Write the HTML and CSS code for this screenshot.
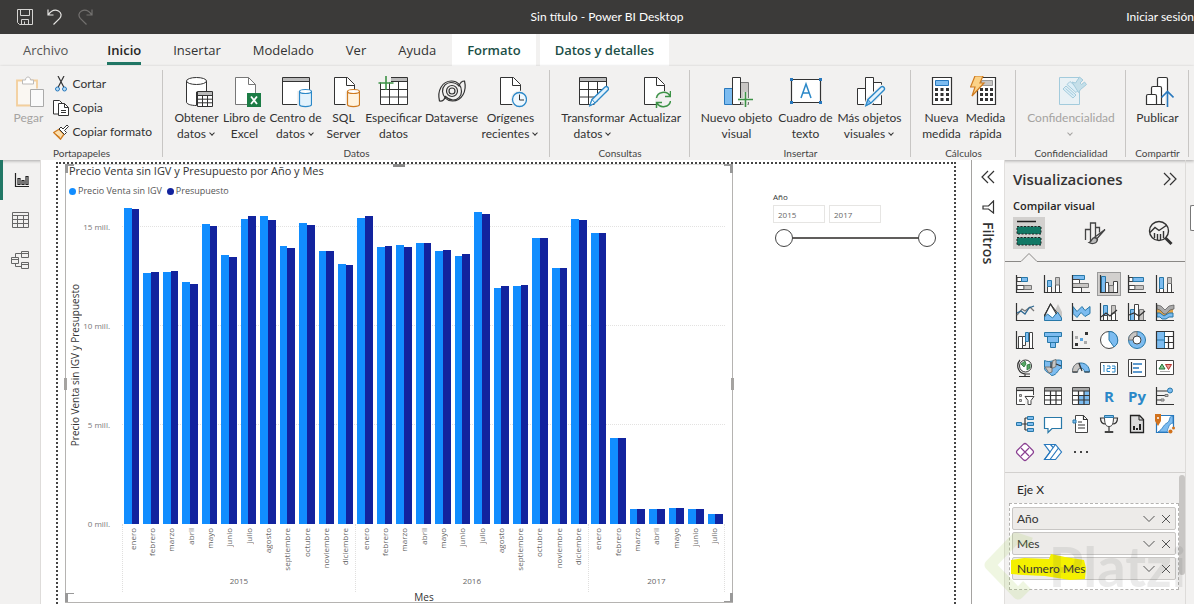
FILE: index.html
```html
<!DOCTYPE html>
<html lang="es">
<head>
<meta charset="utf-8">
<title>Sin título - Power BI Desktop</title>
<meta name="viewport" content="width=device-width, initial-scale=1">
<link rel="stylesheet" href="styles.css">
</head>
<body>
<header class="titlebar">
  <div class="quick">
    <button aria-label="Guardar"><svg width="16" height="16" viewBox="0 0 16 16" fill="none" stroke="#d6d5d3"><path d="M.5.5h15v15h-13l-2-2zM3.500.5v6h9v-6M4.500 15.500v-5h7v5M7.500 15v-2.500"/></svg></button>
    <button aria-label="Deshacer"><svg width="16" height="16" viewBox="0 0 16 16" fill="none" stroke="#e6e5e3" stroke-width="1.200"><path d="M1 .5v5.500h5.500M1.200 5.800C4 2 8 .2 11.500 2c3 1.700 3.300 5 1.200 7.300L6.500 15.500"/></svg></button>
    <button aria-label="Rehacer"><svg width="16" height="16" viewBox="0 0 16 16" fill="none" stroke="#73716f" stroke-width="1.200"><path d="M15 .5v5.500H9.500M14.800 5.800C12 2 8 .2 4.500 2c-3 1.700-3.300 5-1.200 7.300L9.500 15.500"/></svg></button>
  </div>
  <h1 class="app-title">Sin título - Power BI Desktop</h1>
  <button class="signin">Iniciar sesión</button>
</header>

<nav class="tabs" aria-label="Cinta de opciones">
  <button class="tab file">Archivo</button>
  <button class="tab active">Inicio</button>
  <button class="tab">Insertar</button>
  <button class="tab">Modelado</button>
  <button class="tab">Ver</button>
  <button class="tab">Ayuda</button>
  <button class="tab context">Formato</button>
  <button class="tab context">Datos y detalles</button>
</nav>

<div class="ribbon">
  <section class="group g-clip">
    <div class="items">
      <button class="cmd w46 disabled"><svg width="32" height="32" viewBox="0 0 32 32" fill="none"><path d="M5 5h18v23H5z" fill="#faf7f2"/><path d="M10 4.500H4v25h13M18 4.500h6v8" stroke="#f3cf9c" stroke-width="1.800"/><path d="M9.500 8V4h3c0-4 5-4 5 0h3v4z" fill="#fff" stroke="#bdbbb9"/><path d="M17.500 13.500h13v17h-13z" fill="#fafafa" stroke="#aaa"/></svg><span>Pegar</span></button>
      <div class="stack">
        <button class="small"><svg width="16" height="16" viewBox="0 0 16 16" fill="none"><path d="M5 0l6 11.500M11 0L5 11.500" stroke="#333" stroke-width="1.200"/><circle cx="4.500" cy="13" r="2" fill="#b8dcf5" stroke="#2878bd"/><circle cx="11.500" cy="13" r="2" fill="#b8dcf5" stroke="#2878bd"/></svg>Cortar</button>
        <button class="small"><svg width="16" height="16" viewBox="0 0 16 16" fill="#fff" stroke="#333"><path d="M5.500 14H.5V.5h6L9 3"/><path d="M5.500 3.500h6l4 4v8h-10z"/><path d="M11.500 3.500v4h4M8 10.500h5M8 12.500h5" fill="none"/></svg>Copia</button>
        <button class="small"><svg width="16" height="16" viewBox="0 0 16 16"><path d="M.7 8.500L6 5.200l5 5-3.500 5z" fill="#fce0b0" stroke="#cf7b20" stroke-width="1.300"/><path d="M3 10.500l4 3" stroke="#cf7b20"/><path d="M6 5l2-2 2 2 4-4 1.500 1.500-4 4 2 2-2 2z" fill="#fff" stroke="#333"/></svg>Copiar formato</button>
      </div>
    </div>
    <h2 class="group-name">Portapapeles</h2>
  </section>

  <section class="group g-data">
    <div class="items">
      <button class="cmd w48"><svg width="32" height="32" viewBox="0 0 32 32"><path d="M5.500 5v21c0 2 4 3.500 10 3.500V16h10V5" fill="#fff" stroke="#333"/><ellipse cx="15.500" cy="5" rx="10" ry="3.500" fill="#fff" stroke="#333"/><path d="M16.500 15.500h15v15h-15z" fill="#fff" stroke="#333"/><path d="M17 16h14v3H17z" fill="#bbb"/><path d="M16.500 19.500h15M16.500 23.200h15M16.500 26.800h15M21.500 19v11.500M26.500 19v11.500" stroke="#333" fill="none"/></svg><span>Obtener<br>datos<i class="caret"></i></span></button>
      <button class="cmd w48"><svg width="32" height="32" viewBox="0 0 32 32"><path d="M6.500 1.500h13l7 7v20h-20z" fill="#fff" stroke="#777"/><path d="M19.500 1.500v7h7" fill="none" stroke="#777"/><path d="M18 17h14v14H18z" fill="#1c7c45"/><path d="M22 20.500l6 7.500M28 20.500L22 28" stroke="#fff" stroke-width="1.800"/></svg><span>Libro de<br>Excel</span></button>
      <button class="cmd w54"><svg width="32" height="32" viewBox="0 0 32 32"><path d="M2.500 1.500h27v27h-27z" fill="#fff" stroke="#333"/><path d="M3 2h26v3.500H3z" fill="#bbb"/><path d="M2.500 5.500h27" stroke="#333"/><path d="M18.500 15v13c0 3.300 13 3.300 13 0V15" fill="#fff" stroke="#f2f1f0" stroke-width="3"/><path d="M19.500 15.500v13c0 2.700 12 2.700 12 0v-13" fill="#e3f2fc" stroke="#2b88c8" stroke-width="1.200"/><ellipse cx="25.500" cy="15.500" rx="6" ry="2" fill="#fff" stroke="#2b88c8" stroke-width="1.200"/></svg><span>Centro de<br>datos<i class="caret"></i></span></button>
      <button class="cmd w42"><svg width="32" height="32" viewBox="0 0 32 32"><path d="M6.500 1.500h13l7 7v20h-20z" fill="#fff" stroke="#333"/><path d="M18.500 1.500v8h8" fill="none" stroke="#333"/><path d="M19.500 15.500v13c0 2.700 12 2.700 12 0v-13" fill="#fff3df" stroke="#f2f1f0" stroke-width="4"/><path d="M19.500 15.500v13c0 2.700 12 2.700 12 0v-13" fill="#fff3df" stroke="#cf7b20" stroke-width="1.200"/><ellipse cx="25.500" cy="15.500" rx="6" ry="2" fill="#fff" stroke="#cf7b20" stroke-width="1.200"/></svg><span>SQL<br>Server</span></button>
      <button class="cmd w58"><svg width="32" height="32" viewBox="0 0 32 32"><path d="M2.500 1.500h27v27h-27z" fill="#fff" stroke="#333"/><path d="M3 2h26v3.500H3z" fill="#bbb"/><path d="M2.500 5.500h27M2.500 13.500h27M2.500 21h27M11.500 5.500v23M20.500 5.500v23" stroke="#333" fill="none"/><path d="M0 0h13v6.500H0z" fill="#f2f1f0"/><path d="M8 0v14M.5 7h15" stroke="#3c9246" stroke-width="1.600"/></svg><span>Especificar<br>datos</span></button>
      <button class="cmd w58"><svg width="32" height="32" viewBox="0 0 32 32" fill="none" stroke="#333" stroke-width="1.200"><path d="M3.500 25C1 15 6 5 15.500 5 22 5 25.500 10 25.500 15.500c0 5-4 8.500-8.500 8.500-4 0-6-2-7.500-3.500C8.500 23.500 6.500 25.500 3.500 25z"/><path d="M28.500 5C31 15 26 25 16.500 25 11 25 7 21 6.500 15.500 6.500 10 10.500 6.500 15 6.500c4 0 6 1.500 8 3.500 1-3 2.500-5 5.500-5z"/><circle cx="16" cy="15" r="5.500" fill="#f2f1f0"/><circle cx="16" cy="15" r="3"/></svg><span>Dataverse</span></button>
      <button class="cmd w60"><svg width="32" height="32" viewBox="0 0 32 32"><path d="M5.500 1.500h13l7 7v20h-20z" fill="#fff" stroke="#333"/><path d="M17.500 1.500v8h8" fill="none" stroke="#333"/><circle cx="24.500" cy="23.500" r="9" fill="#f2f1f0"/><circle cx="24.500" cy="23.500" r="7" fill="#eff8fe" stroke="#2b88c8" stroke-width="1.300"/><path d="M24.500 18.500v5.500h4.500" fill="none" stroke="#333"/></svg><span>Orígenes<br>recientes<i class="caret"></i></span></button>
    </div>
    <h2 class="group-name">Datos</h2>
  </section>

  <section class="group g-query">
    <div class="items">
      <button class="cmd w70"><svg width="32" height="32" viewBox="0 0 32 32"><path d="M2.500 1.500h27v27h-27z" fill="#fff" stroke="#333"/><path d="M3 2h26v3.500H3z" fill="#bbb"/><path d="M2.500 5.500h27M2.500 13.500h27M2.500 21h27M11.500 5.500v23M20.500 5.500v23" stroke="#333" fill="none"/><path d="M30 15v15H16z" fill="#f2f1f0"/><path d="M13 29.500l2-6L28 11c2-1.500 4.500 1 3 3L18 27z" fill="#e3f2fc" stroke="#2b88c8" stroke-width="1.400"/><path d="M15 23.500l3 3.500-5 2.500z" fill="#fff" stroke="#2b88c8"/></svg><span>Transformar<br>datos<i class="caret"></i></span></button>
      <button class="cmd w54"><svg width="32" height="32" viewBox="0 0 32 32"><path d="M5.500 1.500h13l7 7v20h-20z" fill="#fff" stroke="#333"/><path d="M17.500 1.500v8h8" fill="none" stroke="#333"/><circle cx="24.500" cy="23.500" r="8.500" fill="#f2f1f0"/><path d="M17.500 22c1-6 10-8 13.500-2M31.500 25c-1 6-10 8-13.500 2M31.500 15v5.500H26M17.500 32v-5.500H23" fill="none" stroke="#3c9246" stroke-width="1.500"/></svg><span>Actualizar</span></button>
    </div>
    <h2 class="group-name">Consultas</h2>
  </section>

  <section class="group g-insert">
    <div class="items">
      <button class="cmd w78"><svg width="32" height="32" viewBox="0 0 32 32"><path d="M3.500 12.500h8v16h-8z" fill="#7dbcf0" stroke="#2878bd"/><path d="M19.500 6.500h8v22h-8z" fill="#c8c6c4" stroke="#777"/><path d="M11.500 1.500h8v27h-8z" fill="#fff" stroke="#333"/><path d="M24.500 16v15M17 24h15" stroke="#f2f1f0" stroke-width="4"/><path d="M24.500 16v15M17 23.500h15" stroke="#3c9246" stroke-width="1.600"/></svg><span>Nuevo objeto<br>visual</span></button>
      <button class="cmd w60"><svg width="32" height="32" viewBox="0 0 32 32"><path d="M1.500 3.500h29v23h-29z" fill="#fff" stroke="#333" stroke-width="1.200"/><path d="M0 2h3v3H0zM29 2h3v3h-3zM0 25h3v3H0zM29 25h3v3h-3z" fill="#2878bd"/><path d="M11 22l5-14 5 14M13 17h6.500" fill="none" stroke="#2b88c8" stroke-width="1.500"/></svg><span>Cuadro de<br>texto</span></button>
      <button class="cmd w68"><svg width="32" height="32" viewBox="0 0 32 32"><path d="M3.500 12.500h8v16h-8zM19.500 6.500h8v22h-8zM11.500 1.500h8v27h-8z" fill="#fff" stroke="#333"/><path d="M12 29.500l2-6L27 11c2-1.500 4.500 1 3 3L17 27z" fill="#e3f2fc" stroke="#f2f1f0" stroke-width="4"/><path d="M12 29.500l2-6L27 11c2-1.500 4.500 1 3 3L17 27z" fill="#e3f2fc" stroke="#2b88c8" stroke-width="1.400"/><path d="M14 23.500l3 3.500-5 2.500z" fill="#7dbcf0" stroke="#2b88c8"/></svg><span>Más objetos<br>visuales<i class="caret"></i></span></button>
    </div>
    <h2 class="group-name">Insertar</h2>
  </section>

  <section class="group g-calc">
    <div class="items">
      <button class="cmd w44"><svg width="32" height="32" viewBox="0 0 32 32"><path d="M6.500 1.500h19v27h-19z" fill="#fff" stroke="#333" stroke-width="1.200"/><path d="M9.500 4.500h13v5h-13z" fill="#7dbcf0" stroke="#2878bd"/><path d="M9 12h3v3H9zM14.500 12h3v3h-3zM20 12h3v3h-3zM9 17h3v3H9zM14.500 17h3v3h-3zM20 17h3v3h-3zM9 22h3v3H9zM14.500 22h3v3h-3zM20 22h3v3h-3z" fill="#333"/></svg><span>Nueva<br>medida</span></button>
      <button class="cmd w44"><svg width="32" height="32" viewBox="0 0 32 32"><path d="M7.500 1.500h18v27h-18z" fill="#fff" stroke="#333" stroke-width="1.200"/><path d="M11.500 4.500h11v5h-11z" fill="#c8c6c4" stroke="#999"/><path d="M10 12h3v3h-3zM15 12h3v3h-3zM20 12h3v3h-3zM10 17h3v3h-3zM15 17h3v3h-3zM20 17h3v3h-3zM10 22h3v3h-3zM15 22h3v3h-3zM20 22h3v3h-3z" fill="#333"/><path d="M5 0h8l-3 7h4L2 20l3-9H.5z" fill="#fbd287" stroke="#cf7b20" stroke-width="1.200"/></svg><span>Medida<br>rápida</span></button>
    </div>
    <h2 class="group-name">Cálculos</h2>
  </section>

  <section class="group g-conf">
    <div class="items">
      <button class="cmd disabled"><svg width="32" height="32" viewBox="0 0 32 32" fill="#dceef7" stroke="#a3cbdc"><path d="M4.500 1.500h20v27h-20z" fill="#e9f1f5"/><path d="M8 13l3-3 10 9-3 3z"/><path d="M10.500 12.500l8 7"/><path d="M12 8.500l3-3 9 8-3 3z"/><path d="M17 6l3.500 1 4-6 3.500 3-3 3 1.500 1.500 3-2.500 2 2.500-6 5-2 3z" fill="#c5dfe9"/></svg><span>Confidencialidad<br><i class="caret lone"></i></span></button>
    </div>
    <h2 class="group-name">Confidencialidad</h2>
  </section>

  <section class="group g-share">
    <div class="items">
      <button class="cmd"><svg width="32" height="32" viewBox="0 0 32 32" fill="#fff" stroke="#333" stroke-width="1.200"><path d="M15.500 11V3c0-1 .5-1.500 1.500-1.500h7c1 0 1.500.5 1.500 1.500v25.500h-10z"/><path d="M9.500 28.500V12c0-1 .5-1.500 1.500-1.500h7c1 0 1.500.5 1.500 1.500v16.500z"/><path d="M4.500 28.500V20c0-1 .5-1.500 1.500-1.500h7c1 0 1.500.5 1.500 1.500v8.500z"/><path d="M25.500 31V15" stroke="#f2f1f0" stroke-width="5"/><path d="M25.500 31V15.500M19.500 21.500l6-6 6 6" fill="none" stroke="#2878bd" stroke-width="1.600"/></svg><span>Publicar</span></button>
    </div>
    <h2 class="group-name">Compartir</h2>
  </section>
</div>

<main class="workspace">
  <nav class="rail" aria-label="Vistas">
    <button class="view current" aria-label="Informe"><svg width="16" height="16" viewBox="0 0 16 16" fill="none" stroke="#222" stroke-width="1.200"><path d="M1.500 1v13.500H15M4 6.500h2v6H4zM8 8.500h2v4H8zM12 4.500h2v8h-2z"/></svg></button>
    <button class="view" aria-label="Datos"><svg width="17" height="16" viewBox="0 0 17 16" fill="none" stroke="#666"><path d="M.5.500h16v15H.5zM.5 3.500h16M.5 7.500h16M.5 11.500h16M5.500 3.500v12M11.500 3.500v12"/></svg></button>
    <button class="view" aria-label="Modelo"><svg width="18" height="18" viewBox="0 0 18 18" fill="none" stroke="#666"><path d="M.5 6.500h7v6h-7zM.5 8.500h7M10.500.500h7v6h-7zM10.500 2.500h7M10.500 11.500h7v6h-7zM10.500 13.500h7M4.500 6.500v-4h6M4.500 12.500v3h6"/></svg></button>
  </nav>

  <div class="canvas">
    <div class="page">
      <section class="visual" aria-label="Gráfico de columnas">
        <h3 class="v-title">Precio Venta sin IGV y Presupuesto por Año y Mes</h3>
        <div class="legend"><span class="dot light"></span><span>Precio Venta sin IGV</span><span class="dot dark"></span><span>Presupuesto</span></div>
        <div class="chart">
          <div class="y-title"><span>Precio Venta sin IGV y Presupuesto</span></div>
          <div class="y-axis" id="ticks"></div>
          <div class="plot" id="plot"></div>
          <div class="x-axis" id="months"></div>
        </div>
        <div class="x-title">Mes</div>
        <i class="handle tl"></i><i class="handle tr"></i><i class="handle bl"></i><i class="handle br"></i>
        <i class="handle side l"></i><i class="handle side r"></i><i class="handle top"></i>
      </section>
      <section class="slicer">
        <h3>Año</h3>
        <div class="years"><input aria-label="Desde" value="2015"><input aria-label="Hasta" value="2017"></div>
        <div class="range"><input type="range" aria-label="Año inicial" min="2015" max="2017" value="2015"><input type="range" aria-label="Año final" min="2015" max="2017" value="2017"></div>
      </section>
    </div>
  </div>

  <aside class="filters">
    <button aria-label="Expandir filtros"><svg width="14" height="14" viewBox="0 0 14 14" fill="none" stroke="#333" stroke-width="1.200"><path d="M7 1L1 7l6 6M13 1L7 7l6 6"/></svg></button>
    <svg width="14" height="14" viewBox="0 0 14 14" fill="none" stroke="#333" stroke-width="1.200"><path d="M12.500 1v12L7.500 9H2V6h5.500z"/></svg>
    <h2>Filtros</h2>
  </aside>

  <aside class="viz">
    <div class="viz-head">
      <h2>Visualizaciones</h2>
      <button aria-label="Contraer"><svg width="14" height="14" viewBox="0 0 14 14" fill="none" stroke="#333" stroke-width="1.200"><path d="M1 1l6 6-6 6M7 1l6 6-6 6"/></svg></button>
    </div>
    <h3 class="build">Compilar visual</h3>
    <div class="modes">
      <button class="mode on" aria-label="Compilar visual"><svg width="26" height="26" viewBox="0 0 26 26"><path d="M1 1.500h19" stroke="#222" stroke-width="1.500"/><path d="M1 6.500h24v7.500H1zM1 17.500h24V25H1z" fill="#117865" stroke="#222" stroke-dasharray="2 1.500"/></svg></button>
      <button class="mode" aria-label="Dar formato"><svg width="24" height="24" viewBox="0 0 24 24" fill="none" stroke="#444" stroke-width="1.300"><path d="M2.500 19V8.500h5V20M7.500 9V2h5v13M12.500 6.500h4v5"/><path d="M22 8.500l-8 9-2-1.500z" fill="#fff"/><path d="M12 16.500c-4 0-2.500 4-6 5 3 2 8 1 8.500-3z" fill="#bbb"/></svg></button>
      <button class="mode" aria-label="Análisis"><svg width="26" height="26" viewBox="0 0 26 26" fill="none" stroke="#333" stroke-width="1.400"><circle cx="11" cy="11" r="9.500"/><path d="M17.500 18l6 6" stroke-width="3"/><path d="M2 12.500l5-5 4 3 8-5.500M6.500 18v-5M9.500 20v-6M12.500 20v-6M15.500 18v-7"/></svg></button>
    </div>
    <svg class="notch" viewBox="0 0 180 9" preserveAspectRatio="xMinYMin slice" fill="none" stroke="#8a8886"><path d="M0 8.500h16l8-8 8 8h400"/></svg>

    <div class="gallery" id="gallery">
      <button aria-label="Barras apiladas"><svg viewBox="0 0 18 18"><path class="w" d="M1 2.500h5v4H1zM1 10.500h7v4H1z"/><path class="b" d="M5.500 2.500h6v4h-6z"/><path class="g" d="M8 10.500h7.500v4H8z"/><path class="k" d="M.5 0v17.500H18"/></svg></button>
      <button aria-label="Columnas apiladas"><svg viewBox="0 0 18 18"><path class="w" d="M3.500 11.500h4v6h-4zM11.500 8.500h4v9h-4z"/><path class="b" d="M3.500 5.500h4v6h-4z"/><path class="g" d="M11.500 2.500h4v7.500h-4z"/><path class="k" d="M.5 0v17.500H18"/></svg></button>
      <button aria-label="Barras agrupadas"><svg viewBox="0 0 18 18"><path class="b" d="M.5.500h12v4H.5z"/><path class="w" d="M.5 4.500h7v4h-7z"/><path class="g" d="M.5 8.500h16v4H.5z"/><path class="w" d="M.5 12.500h9v5h-9z"/><path class="k" d="M.5 0v17.500H18"/></svg></button>
      <button class="picked" aria-label="Columnas agrupadas"><svg viewBox="0 0 18 18"><path class="b" d="M1.500 1.500h4v16h-4z"/><path class="w" d="M5.500 7.500h3v10h-3zM13.500 6.500h4v11h-4z"/><path class="g" d="M9 10.500h4.500v7H9z"/><path class="k" d="M.5 0v17.500H18"/></svg></button>
      <button aria-label="Barras 100%"><svg viewBox="0 0 18 18"><path class="w" d="M1 2.500h4v4H1zM1 10.500h6v4H1z"/><path class="b" d="M5 2.500h10.500v4H5z"/><path class="g" d="M7 10.500h8.500v4H7z"/><path class="k" d="M.5 0v17.500H18"/></svg></button>
      <button aria-label="Columnas 100%"><svg viewBox="0 0 18 18"><path class="w" d="M3.500 13.500h4v4h-4zM11.500 8.500h4v9h-4z"/><path class="b" d="M3.500 2.500h4v11h-4z"/><path class="g" d="M11.500 2.500h4v6h-4z"/><path class="k" d="M.5 0v17.500H18"/></svg></button>

      <button aria-label="Líneas"><svg viewBox="0 0 18 18"><path class="k" d="M.5 0v17.500H18"/><path d="M1 12l5-6 3 2 5-4 4 4" fill="none" stroke="#777" stroke-width="1.300"/><path d="M1 10l4-2 4 3 4-6 5-2" fill="none" stroke="#2b6690" stroke-width="1.300"/></svg></button>
      <button aria-label="Área"><svg viewBox="0 0 18 18"><path d="M9 12l5-11 4 8v8H8z" fill="#c8c6c4"/><path class="w" d="M.5 12l6-11 7 9-5 7H.5z"/><path class="b" d="M.5 14l3-3 5 4 5-6 4 6v2.500H.5z"/><path class="k" d="M.5 13l6-12 6 10"/></svg></button>
      <button aria-label="Área apilada"><svg viewBox="0 0 18 18"><path class="b" d="M1 3.500l4 5 5-5 3 4 5-4v7l-5 3-4-4-4 5-4-4z"/><path class="k" d="M.5 0v17.500H18"/></svg></button>
      <button aria-label="Líneas y columnas apiladas"><svg viewBox="0 0 18 18"><path class="b" d="M3.500 2.500h4v10h-4z"/><path class="w" d="M3.500 12.500h4v5h-4zM11.500 10h4v7.500h-4z"/><path class="g" d="M11.500 2.500h4V10h-4z"/><path class="k" d="M.5 0v17.500H18M1 14l5-4 4 3 7-6"/></svg></button>
      <button aria-label="Líneas y columnas agrupadas"><svg viewBox="0 0 18 18"><path class="b" d="M2.500 6.500h4v11h-4z"/><path class="w" d="M6.500 1.500h4v16h-4z"/><path class="g" d="M11.500 6.500h4v11h-4z"/><path class="k" d="M.5 0v17.500H18M1 12l5-2 5 3 6-5"/></svg></button>
      <button aria-label="Cinta"><svg viewBox="0 0 18 18"><path d="M1 6h4l4 5 4-7h4v6h-3l-4 5H7l-3-4H1z" fill="#e3a548"/><path class="b" d="M1 10h3l4 3 5-3h4v4h-4l-3 2H6l-2-2H1z"/><path d="M1 2l4 1 4 4 4-4 5-1v4l-4 1-4 4H8L4 7 1 6z" fill="#aaa" stroke="#555" stroke-width=".7"/><path class="k" d="M.5 0v17.500H18"/></svg></button>

      <button aria-label="Cascada"><svg viewBox="0 0 18 18"><path class="w" d="M2.500 5.500h4v12h-4zM13.500 1.500h3v16h-3z"/><path class="w" d="M6.500 5.500h3v9h-3z"/><path class="b" d="M9.500 1.500h3v9h-3z"/><path class="k" d="M.5 0v17.500H18"/></svg></button>
      <button aria-label="Embudo"><svg viewBox="0 0 18 18"><path class="b" d="M.5 1.500h17v4H.5zM3.500 5.500h11v6h-11zM6.500 11.500h5v5h-5z"/></svg></button>
      <button aria-label="Dispersión"><svg viewBox="0 0 18 18"><path class="k" d="M.5 0v17.500H18"/><path d="M13 1h3v3h-3zM3 12h3v3H3z" fill="#333"/><path d="M3 5h3v3H3zM12 10h3v3h-3z" fill="#aaa"/><path d="M8 7h3v3H8z" fill="#5aa5df"/></svg></button>
      <button aria-label="Circular"><svg viewBox="0 0 18 18"><circle class="w" cx="9" cy="9" r="8.500"/><path class="b" d="M9 .5V9l5 7A8.500 8.500 0 0 0 9 .5z"/></svg></button>
      <button aria-label="Anillo"><svg viewBox="0 0 18 18"><circle class="b" cx="9" cy="9" r="8.500"/><path class="g" d="M9 .5V5a4 4 0 0 0-4 4H.5A8.500 8.500 0 0 1 9 .5z"/><circle class="w" cx="9" cy="9" r="4"/></svg></button>
      <button aria-label="Treemap"><svg viewBox="0 0 18 18"><path class="w" d="M.5.5h17v17H.5z"/><path class="b" d="M.5.500h8v17h-8zM.5 9h8"/><path class="k" d="M8.500 5.500h9M8.500 11.500h9M12.500 5.500v12M.5.5h17v17H.5z"/></svg></button>

      <button aria-label="Mapa"><svg viewBox="0 0 18 18"><circle cx="9.500" cy="7" r="6" fill="#fff" stroke="#333"/><path d="M5 5l4-3 1 3-2 3zM11 6l3-1v4l-3 2z" fill="#58a865" stroke="#277238" stroke-width=".8"/><path class="k" d="M4 1C-1 7 3 15 10 15h4M9 15v2M3 17.500h11"/></svg></button>
      <button aria-label="Mapa coroplético"><svg viewBox="0 0 18 18"><path class="b" d="M.5 1.500c6 3 11-2 17 0v8c-3-1-4 7-10 7-3-4-7-3-7-8z"/><path class="g" d="M9 1.500l3-1v7L8 9.500V6zM1 8h7v5l-3 1z"/><path class="k" d="M12 5l5 2M7 3v6"/></svg></button>
      <button aria-label="Medidor"><svg viewBox="0 0 18 18"><path class="b" d="M.5 13c0-12 17-12 17 0h-5c0-5-7-5-7 0z"/><path class="g" d="M.5 13c0-5 2-8 6-9l2 5c-2 0-3 2-3 4z"/><path class="k" d="M7 4l3 8M.5 13h5M12.500 13h5"/></svg></button>
      <button aria-label="Tarjeta"><svg viewBox="0 0 18 18"><path class="w" d="M.5 3.500h17v12H.5z"/><path d="M4 6v7M3 7l1-1M7 7h3v2.500H7v3h3M12 7h3v6h-3M12 9.500h3" fill="none" stroke="#2b88c8"/></svg></button>
      <button aria-label="Tarjeta de varias filas"><svg viewBox="0 0 18 18"><path class="w" d="M.5.5h17v17H.5z"/><path class="k" d="M3.500 3v12"/><path d="M5 5h9M5 9h6M5 13h9" stroke="#2878bd" stroke-width="1.600"/></svg></button>
      <button aria-label="KPI"><svg viewBox="0 0 18 18"><path class="w" d="M.5 1.500h17v14H.5z"/><path d="M3 10l3-5 3 5z" fill="#7dc48a" stroke="#277238"/><path d="M9.500 5.500h6l-3 5z" fill="#ed9a95" stroke="#b2332c"/><path d="M4 12.500h10" stroke="#aaa"/></svg></button>

      <button aria-label="Segmentación"><svg viewBox="0 0 18 18"><path class="w" d="M.5.500h17v17H.5z"/><path d="M1 1h16v2H1z" fill="#bbb"/><path class="k" d="M.5 3.500h17"/><path class="g" d="M3.500 7.500h2v2h-2zM3.500 12.500h2v2h-2z"/><path d="M9 8h10v10H9z" fill="#f2f1f0"/><path class="w" d="M9 9.500h9l-3 4v4h-3v-4z"/></svg></button>
      <button aria-label="Tabla"><svg viewBox="0 0 18 18"><path class="w" d="M.5.500h17v17H.5z"/><path d="M1 1h16v3H1z" fill="#aaa"/><path class="k" d="M.5 4h17M.5 8.500h17M.5 13h17M6.500 4v13.500M12 4v13.500"/></svg></button>
      <button aria-label="Matriz"><svg viewBox="0 0 18 18"><path class="w" d="M.5.500h17v17H.5z"/><path d="M1 1h16v3H1z" fill="#aaa"/><path d="M12 4h5v13h-5zM7 8.500h5V17H7z" fill="#7dbcf0"/><path class="k" d="M.5 4h17M.5 8.500h17M.5 13h17M6.500 4v13.500M12 4v13.500"/></svg></button>
      <button class="letter" aria-label="Script de R">R</button>
      <button class="letter" aria-label="Script de Python">Py</button>
      <button aria-label="Influenciadores clave"><svg viewBox="0 0 18 18"><path class="k" d="M.5 0v17.500H18M1 4h11M1 8.500h8M1 13h4"/><circle class="b" cx="14" cy="3.500" r="2.500"/><path class="g" d="M9 7.500h3v2H9zM5 12h3v2H5z"/></svg></button>

      <button aria-label="Árbol de descomposición"><svg viewBox="0 0 18 18"><path class="k" d="M6 9h6M9 3h3M9 15h3M9 3v12"/><path class="b" d="M.5 7.500h5v3h-5zM11.500 1.500h6v3h-6zM11.500 7.500h6v3h-6zM11.500 13.500h6v3h-6z"/></svg></button>
      <button aria-label="Preguntas y respuestas"><svg viewBox="0 0 18 18"><path d="M.5 2.500h17v11H8l-4 4v-4H.5z" fill="#fff" stroke="#2878a8" stroke-width="1.200"/></svg></button>
      <button aria-label="Narración"><svg viewBox="0 0 18 18"><path class="w" d="M3.500.500h8l4 4v13h-12z"/><path class="k" d="M11.500.5v4h4M6 7h4M6 10h7M6 13h7"/><path class="b" d="M1 5h3v3H1z"/></svg></button>
      <button aria-label="Objetivos"><svg viewBox="0 0 18 18"><path class="k" d="M4 3H.5c0 5 2 6 5 6M14 3h3.500c0 5-2 6-5 6M9 12v4"/><path class="w" d="M4.500 1.500h9c0 7-1 10-4.500 10s-4.500-3-4.500-10zM5 16.500h8v1H5z"/><path class="b" d="M4.500.5h9v2h-9z"/></svg></button>
      <button aria-label="Informe paginado"><svg viewBox="0 0 18 18"><path d="M2.500.500h9l4 4v13h-13z" fill="#ddd" stroke="#222" stroke-width="1.300"/><path d="M11 0v5h5" fill="none" stroke="#222"/><path d="M5 11h2v4H5zM8 13h2v2H8zM11 9h2v6h-2z" fill="#222"/></svg></button>
      <button aria-label="ArcGIS"><svg viewBox="0 0 18 18"><path d="M.5.500h17v17H.5z" fill="#fff" stroke="#2878bd" stroke-width="1.200"/><path d="M17 1c-5 0-2 5-6 7s-4 6-9 9h9c2-4 1-8 6-9z" fill="#7dbcf0" stroke="#2878bd" stroke-width=".8"/><path d="M-1-1h6v7L2 11l-3-5z" fill="#d1721d"/><circle cx="2" cy="3" r="1" fill="#fff"/><circle cx="15.500" cy="15.500" r="3.500" fill="#f2f1f0"/><circle cx="14.500" cy="16.500" r="2" fill="#d1721d"/><circle cx="17.500" cy="13" r="1.500" fill="#d1721d"/></svg></button>

      <button aria-label="Power Apps"><svg viewBox="0 0 18 18" fill="#fff" stroke="#8a3f91" stroke-width="1.200"><path d="M7.500 1.200q1.500-1.400 3 0l6.300 6.300q1.400 1.500 0 3l-6.300 6.300q-1.500 1.400-3 0L1.200 10.500q-1.400-1.500 0-3z"/><path d="M5 5l8 8M13 5l-8 8" fill="none"/></svg></button>
      <button aria-label="Power Automate"><svg viewBox="0 0 18 18"><path d="M.5 1.500h11l6 7.500-6 7.500H.5L6 9z" fill="#fff" stroke="#2878bd" stroke-width="1.200"/><path d="M11.500 1.500L.5 16.500M14.500 5L6 16.500M6.500 1.500L9.500 5" fill="none" stroke="#2878bd" stroke-width="1.200"/></svg></button>
      <button aria-label="Más"><svg viewBox="0 0 18 18" fill="#444"><path d="M2 8h2v2H2zM8 8h2v2H8zM14 8h2v2h-2z"/></svg></button>
    </div>

    <section class="wells">
      <h3>Eje X</h3>
      <ul class="well">
        <li class="field"><span>Año</span><button aria-label="Opciones de Año"><svg width="12" height="8" viewBox="0 0 12 8"><path d="M.5 1L6 6.500 11.500 1"/></svg></button><button aria-label="Quitar Año"><svg width="10" height="10" viewBox="0 0 10 10"><path d="M1 1l8 8M9 1L1 9"/></svg></button></li>
        <li class="field"><span>Mes</span><button aria-label="Opciones de Mes"><svg width="12" height="8" viewBox="0 0 12 8"><path d="M.5 1L6 6.500 11.500 1"/></svg></button><button aria-label="Quitar Mes"><svg width="10" height="10" viewBox="0 0 10 10"><path d="M1 1l8 8M9 1L1 9"/></svg></button></li>
        <li class="field"><svg class="marker" viewBox="0 0 78 28" preserveAspectRatio="none"><path d="M1 7L14 5l25 1 2-5 14 3 19 3 2 8-1 11-15 1-25-4-22-1L1 21z"/></svg><span>Numero Mes</span><button aria-label="Opciones de Numero Mes"><svg width="12" height="8" viewBox="0 0 12 8"><path d="M.5 1L6 6.500 11.500 1"/></svg></button><button aria-label="Quitar Numero Mes"><svg width="10" height="10" viewBox="0 0 10 10"><path d="M1 1l8 8M9 1L1 9"/></svg></button></li>
      </ul>
      <i class="scrollbar"></i>
    </section>
  </aside>
  <aside class="edge"><i></i></aside>
  <div class="brand" aria-hidden="true"><svg width="66" height="70" viewBox="0 0 66 70" fill="none" stroke="#98ca3f" stroke-width="11" stroke-linejoin="round"><path d="M48 12L33 7 7 34l28 29 9-9"/></svg><span>Platzi</span></div>
</main>
<script src="chart.js"></script>
</body>
</html>
```

FILE: styles.css
```css
* { box-sizing: border-box; }
body {
  margin: 0;
  height: 100vh;
  display: flex;
  flex-direction: column;
  overflow: hidden;
  font: 12px/16px Lato, "Open Sans", sans-serif;
  color: #333;
  background: #f2f1f0;
}
h1, h2, h3, ul { margin: 0; padding: 0; font-size: inherit; font-weight: 400; list-style: none; }
button { font: inherit; color: inherit; background: none; border: 0; padding: 0; }
svg { flex: none; display: block; }

.titlebar {
  flex: none;
  display: grid;
  grid-template-columns: 1fr auto 1fr;
  align-items: center;
  height: 34px;
  background: #3b3a39;
  color: #fff;
}
.quick { display: flex; gap: 14px; padding-left: 17px; }
.app-title { padding-left: 20px; }
.signin { justify-self: end; white-space: nowrap; }

.tabs { flex: none; display: flex; height: 32px; padding-left: 7px; font: 13px "Open Sans", sans-serif; }
.tab { padding: 0 16px; line-height: 30px; position: relative; white-space: nowrap; }
.tab.file { margin-right: 7px; color: #555; }
.tab.active { font-weight: 600; color: #252423; }
.tab.active::after {
  content: "";
  position: absolute;
  left: 16px; right: 16px; bottom: 1px;
  height: 3px;
  background: #217765;
}
.tab.context { background: #fff; font-weight: 600; color: #1c4f47; margin-right: 4px; padding: 0 15px; }

.ribbon {
  flex: none;
  display: flex;
  height: 94px;
  position: relative;
  box-shadow: 0 1px 3px rgba(0, 0, 0, .3);
  background: #f2f1f0;
}
.group { flex: none; display: flex; flex-direction: column; align-items: center; padding-top: 10px; position: relative; }
.group::after { content: ""; position: absolute; right: 0; top: 4px; bottom: 3px; width: 1px; background: #c8c6c4; }
.g-clip { width: 163px; }
.g-data { width: 387px; }
.g-query { width: 140px; }
.g-insert { width: 221px; }
.g-calc { width: 105px; }
.g-conf { width: 110px; }
.g-share { width: 63px; }
.items { display: flex; height: 70px; }
.group-name { font-size: 10px; line-height: 14px; white-space: nowrap; color: #444; }
.cmd { display: flex; flex-direction: column; align-items: center; gap: 2px; }
.cmd span { white-space: nowrap; }
.disabled { color: #a5a3a1; }
.w42 { width: 42px; } .w44 { width: 44px; } .w46 { width: 46px; } .w48 { width: 48px; }
.w54 { width: 54px; } .w58 { width: 58px; } .w60 { width: 60px; }
.w68 { width: 68px; } .w70 { width: 70px; } .w78 { width: 78px; }
.caret {
  display: inline-block;
  width: 4px; height: 4px;
  margin: 0 2px 3px 4px;
  border: solid currentColor;
  border-width: 0 1px 1px 0;
  transform: rotate(45deg);
}
.caret.lone { margin-left: 0; }
.stack { display: flex; flex-direction: column; gap: 8px; width: 106px; }
.small { display: flex; gap: 4px; align-items: center; white-space: nowrap; height: 16px; margin-left: 1px; }

.workspace { flex: 1; min-height: 0; display: flex; position: relative; overflow: hidden; }
.rail { width: 41px; flex: none; border-right: 1px solid #dedcda; }
.view { display: flex; align-items: center; justify-content: center; width: 100%; height: 40px; }
.view.current { border-left: 3px solid #217765; }
.canvas { flex: 1; min-width: 0; padding: 2px 15px 0; background: #fff; display: flex; font-family: "Open Sans", sans-serif; }
.page {
  flex: 1;
  display: grid;
  grid-template-columns: 668fr 221fr;
  align-items: start;
  padding-left: 7px;
  border: 2px dotted #444;
  border-bottom: 0;
}
.visual {
  position: relative;
  padding: 0 7px 0 3px;
  border: 1px solid #b5b3b1;
  border-top-color: #dddcdb;
  color: #333;
}
.v-title { font-size: 11px; line-height: 12px; color: #333; white-space: nowrap; }
.legend { display: flex; align-items: center; font-size: 9px; line-height: 12px; padding: 8px 0 10px; color: #555; }
.dot { width: 7px; height: 7px; border-radius: 50%; margin-right: 2px; }
.dot.light { background: #118dff; }
.dot.dark { background: #12239e; margin-left: 5px; }
.chart { display: grid; grid-template-columns: 12px 41px 1fr; grid-template-rows: 317px 68px; }
.y-title { display: flex; align-items: center; justify-content: center; font-size: 10px; line-height: 12px; }
.y-title span, .month span { writing-mode: vertical-rl; transform: rotate(180deg); white-space: nowrap; }
.y-axis { position: relative; font-size: 8px; color: #777; margin-right: 12px; }
.tick { position: absolute; right: 0; line-height: 10px; margin-bottom: -5px; white-space: nowrap; }
.plot { position: relative; display: grid; grid-template-columns: repeat(31, 1fr); }
.gridline { position: absolute; left: 0; right: 0; border-top: 1px dotted #e3e2e1; }
.pair { display: flex; align-items: flex-end; justify-content: center; padding: 0 2px; position: relative; }
.bar { flex: 1; background: #118dff; }
.bar.budget { background: #12239e; }
.x-axis { grid-column: 3; display: flex; font-size: 8px; color: #666; border-right: 1px dotted #e0dfde; }
.year { display: flex; flex-direction: column; border-left: 1px dotted #e0dfde; }
.months { display: flex; height: 51px; }
.month { flex: 1; width: 0; display: flex; justify-content: center; align-items: flex-start; line-height: 10px; padding-top: 4px; }
.year-name { text-align: center; line-height: 12px; }
.x-title { text-align: center; font-size: 10px; line-height: 10px; padding-left: 54px; }
.handle { position: absolute; width: 9px; height: 9px; border: solid #999; border-width: 0; }
.tl { left: -1px; top: -1px; border-width: 2px 0 0 3px; }
.tr { right: -1px; top: -1px; border-width: 2px 3px 0 0; }
.bl { left: -1px; bottom: 0; border-width: 1px 0 0 3px; }
.br { right: -1px; bottom: 0; border-width: 0 3px 1px 0; }
.side { top: 50%; margin-top: -6px; height: 12px; width: 3px; background: #a5a3a1; }
.side.l { left: -2px; }
.side.r { right: -2px; }
.handle.top { top: -1px; left: 50%; margin-left: -6px; height: 3px; width: 12px; background: #888; }

.slicer { padding: 27px 18px 0 40px; color: #555; }
.slicer h3 { font-size: 8px; line-height: 12px; color: #333; }
.years { display: flex; gap: 4px; padding: 2px 0 0; }
.years input {
  width: 52px; height: 18px;
  padding: 0 4px;
  border: 1px solid #e6e5e3;
  background: #fff;
  font: 8px "Open Sans", sans-serif;
  color: #666;
}
.range { display: grid; margin-top: 5px; padding-left: 2px; position: relative; }
.range::before { content: ""; position: absolute; left: 12px; right: 10px; top: 9px; height: 2px; background: #605e5c; }
.range input { grid-area: 1 / 1; appearance: none; width: 100%; margin: 0; height: 19px; background: none; pointer-events: none; position: relative; }
.range input::-webkit-slider-thumb {
  appearance: none;
  width: 18px; height: 18px;
  border: 1px solid #444;
  border-radius: 50%;
  background: #fff;
  pointer-events: auto;
}

.filters {
  width: 33px;
  flex: none;
  display: flex;
  flex-direction: column;
  align-items: center;
  gap: 16px;
  padding-top: 10px;
  border-left: 1px solid #a5a3a1;
  background: #fff;
}
.filters h2 { writing-mode: vertical-rl; font: 600 14px/16px "Open Sans", sans-serif; margin-top: -8px; }

.viz { width: 182px; flex: none; border-left: 1px solid #e1dfdd; border-right: 1px solid #dddbd9; display: flex; flex-direction: column; }
.viz-head { display: flex; justify-content: space-between; align-items: center; padding: 9px 8px 0 8px; }
.viz-head h2 { font: 600 15px/20px "Open Sans", sans-serif; }
.viz h3 { padding-left: 8px; color: #252423; }
.viz .build { margin-top: 9px; font: 600 11px/16px "Open Sans", sans-serif; }
.modes { display: flex; justify-content: space-between; padding: 3px 8px 0; }
.mode { width: 32px; height: 32px; display: flex; align-items: center; justify-content: center; }
.mode.on { background: #d2d0ce; }
.notch { width: 100%; height: 9px; margin-top: 4px; }
.gallery { display: grid; grid-template-columns: repeat(6, 28px); grid-auto-rows: 28px; padding: 8px 0 0 6px; }
.gallery button { display: flex; align-items: center; justify-content: center; width: 24px; height: 24px; place-self: center; }
.gallery svg { width: 18px; height: 18px; overflow: visible; }
.gallery .picked { background: #d2d0ce; border: 1px solid #999; }
.gallery .letter { color: #2b88c8; font: 700 15px "Open Sans", sans-serif; }
.k { fill: none; stroke: #333; stroke-width: 1.2; }
.w { fill: #fff; stroke: #444; }
.b { fill: #7dbcf0; stroke: #2878a8; }
.g { fill: #c8c6c4; stroke: #777; }

.wells { flex: 1; position: relative; margin-top: 6px; border-top: 1px solid #d2d0ce; padding: 0 6px 0 4px; }
.wells h3 { line-height: 18px; margin-top: 8px; padding-left: 8px; }
.well { margin-top: 4px; background: #fff; border: 1px dashed #b5b3b1; padding: 3px 2px 9px; display: grid; gap: 2px; }
.field {
  position: relative;
  display: flex;
  align-items: center;
  gap: 6px;
  height: 23px;
  padding: 0 4px;
  border: 1px solid #c8c6c4;
  border-radius: 2px;
  background: #edebe9;
}
.field span { flex: 1; position: relative; }
.field button svg { fill: none; stroke: #555; }
.marker { position: absolute; left: -3px; top: -5px; width: 78px; height: 28px; fill: #f4f000; }
.scrollbar { position: absolute; right: 0; top: 2px; width: 6px; height: 100px; border-radius: 3px; background: #c8c6c4; }
.edge { width: 8px; flex: none; padding-top: 45px; }
.edge i { display: block; margin-left: 4px; height: 26px; border: 1px solid #777; border-right: 0; border-radius: 2px 0 0 2px; background: #fff; }
.brand { position: absolute; right: 8px; bottom: 3px; display: flex; align-items: center; pointer-events: none; }
.brand svg { opacity: .15; }
.brand span { font: 700 56px/60px Lato, sans-serif; color: #555; opacity: .11; }
```

FILE: chart.js
```js
const MAX = 16;
const names = ["enero", "febrero", "marzo", "abril", "mayo", "junio", "julio", "agosto", "septiembre", "octubre", "noviembre", "diciembre"];
const data = {
  2015: [[15.94, 15.92], [12.65, 12.73], [12.7, 12.75], [12.22, 12.12], [15.13, 15.05], [13.56, 13.48], [15.4, 15.55], [15.53, 15.35], [14.02, 13.94], [15.18, 15.07], [13.76, 13.78], [13.13, 13.05]],
  2016: [[15.45, 15.53], [13.99, 14.04], [14.07, 13.99], [14.17, 14.18], [13.76, 13.81], [13.51, 13.61], [15.73, 15.63], [11.92, 11.99], [11.99, 12.04], [14.44, 14.44], [12.93, 12.93], [15.4, 15.33]],
  2017: [[14.67, 14.67], [4.32, 4.32], [0.76, 0.76], [0.76, 0.76], [0.81, 0.81], [0.76, 0.76], [0.5, 0.5]]
};
const add = (parent, cls, text) => {
  const el = document.createElement("div");
  el.className = cls;
  if (text) el.textContent = text;
  parent.append(el);
  return el;
};
const plot = document.getElementById("plot");
const ticks = document.getElementById("ticks");
const axis = document.getElementById("months");

for (const v of [0, 5, 10, 15]) {
  add(ticks, "tick", v + " mill.").style.bottom = (v / MAX * 100) + "%";
  if (v) add(plot, "gridline").style.bottom = (v / MAX * 100) + "%";
}
for (const [year, rows] of Object.entries(data)) {
  const block = add(axis, "year");
  block.style.flex = rows.length + " 1 0";
  const months = add(block, "months");
  rows.forEach((pair, i) => {
    const col = add(plot, "pair");
    pair.forEach((v, j) => {
      add(col, j ? "bar budget" : "bar").style.height = (v / MAX * 100) + "%";
    });
    const label = document.createElement("span");
    label.textContent = names[i];
    add(months, "month").append(label);
  });
  add(block, "year-name", year);
}
```
